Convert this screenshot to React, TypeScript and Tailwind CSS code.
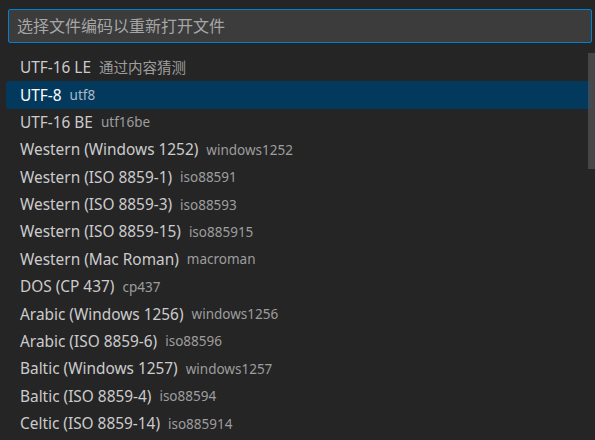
import React from "react";

type Encoding = { label: string; description: string; cjk?: boolean };

const encodings: Encoding[] = [
  { label: "UTF-16 LE", description: "通过内容猜测", cjk: true },
  { label: "UTF-8", description: "utf8" },
  { label: "UTF-16 BE", description: "utf16be" },
  { label: "Western (Windows 1252)", description: "windows1252" },
  { label: "Western (ISO 8859-1)", description: "iso88591" },
  { label: "Western (ISO 8859-3)", description: "iso88593" },
  { label: "Western (ISO 8859-15)", description: "iso885915" },
  { label: "Western (Mac Roman)", description: "macroman" },
  { label: "DOS (CP 437)", description: "cp437" },
  { label: "Arabic (Windows 1256)", description: "windows1256" },
  { label: "Arabic (ISO 8859-6)", description: "iso88596" },
  { label: "Baltic (Windows 1257)", description: "windows1257" },
  { label: "Baltic (ISO 8859-4)", description: "iso88594" },
  { label: "Celtic (ISO 8859-14)", description: "iso885914" },
];

const SELECTED = 1;

export default function App() {
  return (
    <div
      className="w-[595px] h-[440px] overflow-hidden bg-[#252526] relative"
      style={{ fontFamily: '"Segoe UI", "Noto Sans", "Noto Sans CJK SC", sans-serif' }}
    >
      <div className="pt-[9px] pl-[8px] pr-[3px]">
        <div className="h-[34px] rounded-[2px] border border-[#007fd4] bg-[#3c3c3c] flex items-center pl-[8px]">
          <span className="text-[16px] text-[#a6a6a6] leading-none">选择文件编码以重新打开文件</span>
        </div>
      </div>

      <div className="relative mt-[11px]">
        <div className="flex flex-col">
          {encodings.map((e, i) => {
            const sel = i === SELECTED;
            return (
              <div
                key={e.label}
                className={
                  sel
                    ? "h-[27.4px] ml-[6px] mr-[3px] rounded-[3px] bg-[#04395e] flex items-center pl-[14px] gap-[8px]"
                    : "h-[27.4px] ml-[6px] mr-[3px] flex items-center pl-[14px] gap-[8px]"
                }
              >
                <span className={sel ? "text-[15.4px] text-white" : "text-[15.4px] text-[#cccccc]"}>{e.label}</span>
                <span
                  className={
                    (e.cjk ? "text-[14.5px] " : "text-[13.5px] ") + (sel ? "text-[#a9b9c6]" : "text-[#9d9d9d]")
                  }
                >
                  {e.description}
                </span>
              </div>
            );
          })}
        </div>
        {/* scrollbar slider */}
        <div className="absolute right-0 top-[-1px] w-[7px] h-[116px] bg-[#4f4f4f]/80" />
      </div>
    </div>
  );
}
